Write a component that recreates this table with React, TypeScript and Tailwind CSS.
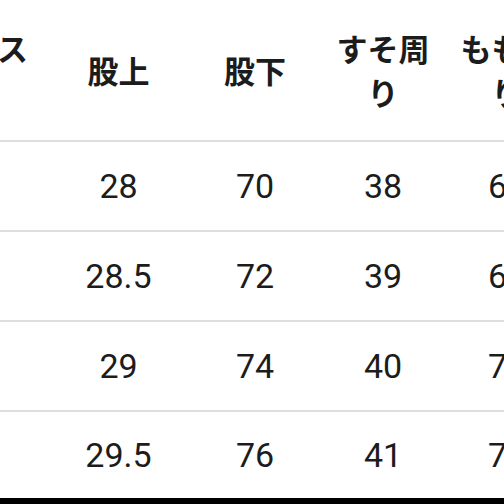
const HEADERS = ["ウエスト", "股上", "股下", "すそ周り", "もも周り"];

const ROWS: string[][] = [
  ["68", "28", "70", "38", "66"],
  ["72", "28.5", "72", "39", "68"],
  ["76", "29", "74", "40", "70"],
  ["80", "29.5", "76", "41", "72"],
];

const COLS = "grid grid-cols-[137px_137px_136px_120px_128px] -ml-[87px]";

export default function App() {
  return (
    <div className="h-[504px] w-[504px] overflow-hidden bg-white flex flex-col text-[#1c1c1c]">
      {/* Header row */}
      <div className={`${COLS} h-[142px] shrink-0 border-b-2 border-[#dedede]`}>
        {HEADERS.map((h) => (
          <div
            key={h}
            className="flex items-center justify-center px-3 text-center font-bold text-[31px] leading-[44px] [font-family:'Noto_Sans_CJK_JP',sans-serif]"
          >
            {h}
          </div>
        ))}
      </div>

      {/* Body rows */}
      {ROWS.map((row, i) => (
        <div
          key={i}
          className={`${COLS} shrink-0 ${
            i === ROWS.length - 1 ? "h-[86px]" : "h-[90px] border-b-2 border-[#dedede]"
          }`}
        >
          {row.map((v, j) => (
            <div
              key={j}
              className="flex items-center justify-center px-3 text-[34px] [font-family:Roboto,'Liberation_Sans',sans-serif]"
            >
              {v}
            </div>
          ))}
        </div>
      ))}

      <div className="flex-1 bg-black" />
    </div>
  );
}
